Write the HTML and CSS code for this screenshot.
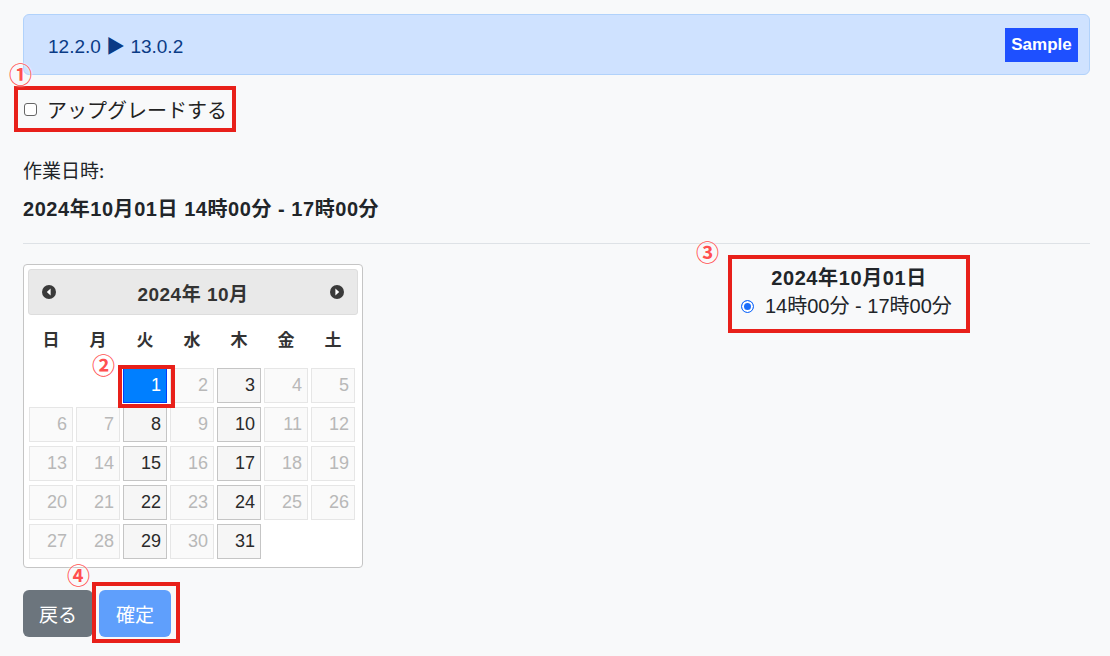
FILE: index.html
```html
<!DOCTYPE html>
<html lang="ja">
<head>
    <meta charset="UTF-8">
    <meta name="viewport" content="width=device-width, initial-scale=1.0">
    <title>アップグレード予約</title>
    <link rel="stylesheet" href="styles.css">
</head>
<body>

<div class="page">
    <!-- バージョン表示 -->
    <div class="alert">
        <span class="version">12.2.0 ▶ 13.0.2</span>
        <span class="badge">Sample</span>
    </div>

    <!-- アップグレードチェック -->
    <div class="upgrade">
        <span class="mark mark-upgrade">①</span>
        <label class="upgrade-label"><input type="checkbox" class="check"> アップグレードする</label>
    </div>

    <p class="label">作業日時:</p>
    <p class="datetime">2024年10月01日 14時00分 - 17時00分</p>
    <hr class="divider">

    <div class="schedule">
        <!-- カレンダー -->
        <div class="calendar">
            <div class="cal-header">
                <svg class="cal-arrow" width="14" height="14" viewBox="0 0 14 14"><circle cx="7" cy="7" r="7" fill="#3a3a3a"/><path d="M8.6 3.6 L4.8 7 L8.6 10.4 Z" fill="#fff"/></svg>
                <span class="cal-title">2024年 10月</span>
                <svg class="cal-arrow" width="14" height="14" viewBox="0 0 14 14"><circle cx="7" cy="7" r="7" fill="#3a3a3a"/><path d="M5.4 3.6 L9.2 7 L5.4 10.4 Z" fill="#fff"/></svg>
            </div>
            <div class="cal-dow">
                <span>日</span><span>月</span><span>火</span><span>水</span><span>木</span><span>金</span><span>土</span>
            </div>
            <div class="cal-days">
                <span class="day empty"></span>
                <span class="day empty"></span>
                <span class="day active"><span class="mark mark-day">②</span>1</span>
                <span class="day off">2</span>
                <span class="day">3</span>
                <span class="day off">4</span>
                <span class="day off">5</span>

                <span class="day off">6</span>
                <span class="day off">7</span>
                <span class="day">8</span>
                <span class="day off">9</span>
                <span class="day">10</span>
                <span class="day off">11</span>
                <span class="day off">12</span>

                <span class="day off">13</span>
                <span class="day off">14</span>
                <span class="day">15</span>
                <span class="day off">16</span>
                <span class="day">17</span>
                <span class="day off">18</span>
                <span class="day off">19</span>

                <span class="day off">20</span>
                <span class="day off">21</span>
                <span class="day">22</span>
                <span class="day off">23</span>
                <span class="day">24</span>
                <span class="day off">25</span>
                <span class="day off">26</span>

                <span class="day off">27</span>
                <span class="day off">28</span>
                <span class="day">29</span>
                <span class="day off">30</span>
                <span class="day">31</span>
            </div>
        </div>

        <!-- 時間帯 -->
        <div class="slots">
            <span class="mark mark-slot">③</span>
            <div class="slot-date">2024年10月01日</div>
            <label class="slot-option"><input type="radio" class="radio" name="slot" checked> 14時00分 - 17時00分</label>
        </div>
    </div>

    <div class="actions">
        <button class="btn btn-back">戻る</button>
        <span class="submit-wrap">
            <span class="mark mark-submit">④</span>
            <button class="btn btn-submit">確定</button>
        </span>
    </div>
</div>

</body>
</html>
```

FILE: styles.css
```css
body {
    margin: 0;
    padding: 0;
    background-color: #f8f9fa;
    color: #212529;
    font-family: "Liberation Sans", "Noto Sans CJK JP", sans-serif;
    font-size: 19px;
}

.page {
    padding: 14px 20px 19px 23px;
}

.alert {
    display: flex;
    align-items: center;
    justify-content: space-between;
    height: 61px;
    box-sizing: border-box;
    padding: 0 11px 0 24px;
    background-color: #cfe2ff;
    border: 1px solid #b1d2fb;
    border-radius: 6px;
    color: #0a3b86;
}

.version {
    font-size: 19px;
}

.badge {
    display: inline-flex;
    align-items: center;
    justify-content: center;
    width: 73px;
    height: 34px;
    background-color: #1e50ff;
    color: white;
    font-weight: bold;
    font-size: 17px;
}

/* 注釈の丸数字 */
.mark {
    position: absolute;
    z-index: 3;
    font-family: "Noto Sans CJK JP", sans-serif;
    font-size: 23px;
    line-height: 23px;
    font-weight: bold;
    color: #ff5050;
    text-shadow: 0 0 2px #fff, 0 0 2px #fff;
}

.upgrade {
    position: relative;
    display: inline-block;
    margin: 11px 0 0 -9px;
}

.mark-upgrade {
    left: -5px;
    top: -24px;
}

.upgrade-label {
    display: flex;
    align-items: center;
    height: 46px;
    box-sizing: border-box;
    padding: 0 5px 0 6px;
    border: 4px solid #e8201a;
    font-family: "Noto Sans CJK JP", sans-serif;
    font-size: 20px;
    color: #222;
}

.check {
    appearance: none;
    width: 13px;
    height: 13px;
    margin: 1px 10px 0 0;
    border: 1px solid #666;
    border-radius: 3px;
    background: white;
}

.label {
    margin: 24px 0 0;
    line-height: 27px;
    font-family: "Noto Sans CJK JP", sans-serif;
    font-size: 19px;
}

.datetime {
    margin: 13px 0 0;
    line-height: 27px;
    font-weight: bold;
    font-size: 20px;
    letter-spacing: 0.55px;
}

.divider {
    margin: 20px 0 0;
    border: none;
    border-top: 1px solid #dee2e6;
}

.schedule {
    display: flex;
    align-items: flex-start;
}

.calendar {
    width: 340px;
    box-sizing: border-box;
    margin-top: 20px;
    padding: 4px 4px 8px;
    background-color: white;
    border: 1px solid #c5c5c5;
    border-radius: 4px;
}

.cal-header {
    display: flex;
    align-items: center;
    justify-content: space-between;
    height: 46px;
    box-sizing: border-box;
    padding: 0 13px;
    background-color: #e9e9e9;
    border: 1px solid #dddddd;
    border-radius: 3px;
}

.cal-title {
    font-weight: bold;
    font-size: 19px;
    letter-spacing: 0.5px;
    color: #333;
}

.cal-dow,
.cal-days {
    display: grid;
    grid-template-columns: repeat(7, 44px);
    column-gap: 3px;
    margin-left: 1px;
}

.cal-dow {
    height: 48px;
    align-items: center;
    text-align: center;
    line-height: 20px;
    font-family: "Noto Sans CJK JP", sans-serif;
    font-weight: bold;
    font-size: 17px;
    color: #333;
}

.cal-days {
    margin-top: 5px;
    grid-auto-rows: 35px;
    row-gap: 4px;
}

.day {
    position: relative;
    box-sizing: border-box;
    padding-right: 5px;
    line-height: 33px;
    text-align: right;
    font-size: 18px;
    background-color: #f6f6f6;
    border: 1px solid #c5c5c5;
    color: #2a2a2a;
}

.day.off {
    background-color: #fafafa;
    border-color: #e6e6e6;
    color: #b8b8b8;
}

.day.empty {
    background: none;
    border: none;
}

.day.active {
    z-index: 2;
    background-color: #007fff;
    border-color: #003eff;
    color: white;
}

.day.active::after {
    content: "";
    position: absolute;
    top: -4px;
    left: -6px;
    right: -9px;
    bottom: -6px;
    border: 4px solid #e8201a;
}

.mark-day {
    left: -32px;
    top: -16px;
}

.slots {
    position: relative;
    width: 242px;
    height: 78px;
    box-sizing: border-box;
    margin: 11px 0 0 365px;
    padding: 6px 0 0 9px;
    border: 4px solid #e8201a;
}

.mark-slot {
    left: -36px;
    top: -19px;
}

.slot-date {
    padding-right: 9px;
    text-align: center;
    line-height: 27px;
    font-weight: bold;
    font-size: 20px;
    letter-spacing: 0.6px;
}

.slot-option {
    display: flex;
    align-items: center;
    line-height: 29px;
    font-size: 20px;
}

.radio {
    appearance: none;
    width: 13px;
    height: 13px;
    margin: 0 11px 0 0;
    border: 1px solid #1a6dfb;
    border-radius: 50%;
    background-color: #1a6dfb;
    box-shadow: inset 0 0 0 2px white;
}

.actions {
    display: flex;
    gap: 6px;
    margin-top: 22px;
}

.btn {
    height: 47px;
    border: none;
    border-radius: 6px;
    color: white;
    font-family: "Noto Sans CJK JP", sans-serif;
    font-size: 19px;
    cursor: pointer;
}

.btn-back {
    width: 70px;
    background-color: #6c757d;
}

.submit-wrap {
    position: relative;
    display: flex;
}

.submit-wrap::after {
    content: "";
    position: absolute;
    top: -8px;
    left: -7px;
    right: -9px;
    bottom: -6px;
    border: 4px solid #e8201a;
}

.btn-submit {
    width: 72px;
    background-color: #5f9ffc;
}

.mark-submit {
    left: -32px;
    top: -27px;
}
```
